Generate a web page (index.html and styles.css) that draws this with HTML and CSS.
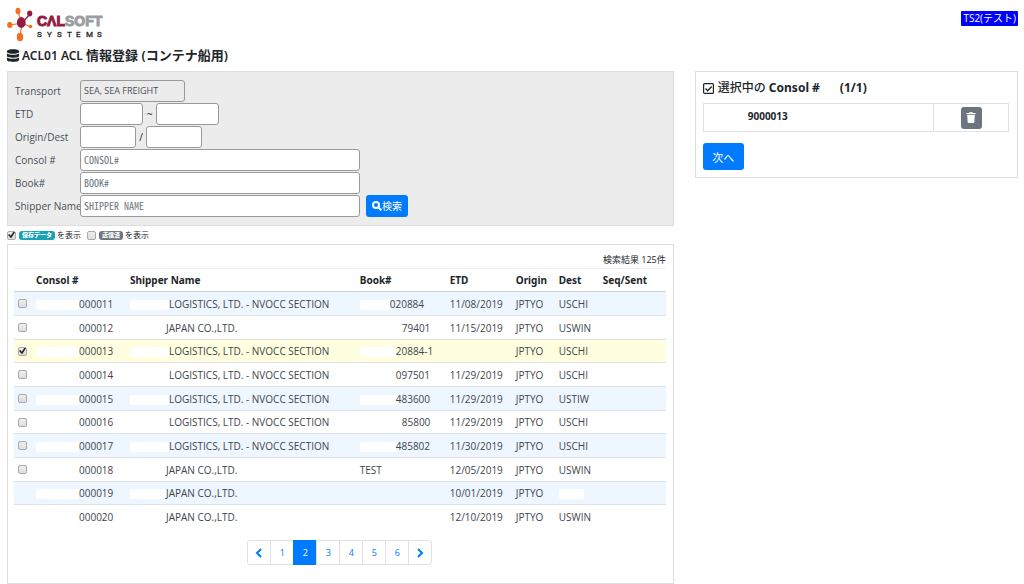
FILE: index.html
```html
<!DOCTYPE html>
<html lang="ja">
<head>
  <meta charset="UTF-8">
  <meta name="viewport" content="width=device-width, initial-scale=1.0">
  <title>ACL01 ACL 情報登録</title>
  <link rel="stylesheet" href="styles.css">
</head>
<body>
  <header class="topbar">
    <a href="#" class="logo" aria-label="Calsoft Systems">
      <svg width="98" height="36" viewBox="0 0 98 36">
        <g stroke="#e8752b" stroke-width="1.2">
          <path d="M15 16L11 5M15 16L3 18M15 17L13 29M15 16l9 4"/>
          <path d="M15 16l8-9" stroke="#8f1a3d"/>
        </g>
        <g fill="#f26f21">
          <ellipse cx="11" cy="4" rx="2.5" ry="3.2"/>
          <ellipse cx="2.8" cy="18" rx="2.7" ry="3"/>
          <ellipse cx="13" cy="30" rx="3.2" ry="4.3"/>
          <circle cx="23.5" cy="19.5" r="1.8"/>
        </g>
        <g fill="#951b40">
          <ellipse cx="14.3" cy="15.5" rx="4.4" ry="5.4"/>
          <ellipse cx="22.7" cy="6.5" rx="2.6" ry="3"/>
        </g>
        <text class="logo-name" x="30" y="19" fill="#951b40" stroke="#951b40">CΛL<tspan fill="#9b9d9f" stroke="#9b9d9f">SOFT</tspan></text>
        <text class="logo-sub" x="30 40 50 60 69 79 90" y="30">SYSTEMS</text>
      </svg>
    </a>
    <span class="env">TS2(テスト)</span>
  </header>

  <h1 class="page-title">
    <svg width="12" height="13" viewBox="0 0 12 13" fill="#212529">
      <path d="M0 2C0-.5 12-.5 12 2v1c0 2.400-12 2.400-12 0z"/>
      <path d="M0 4.500c2 1.800 10 1.800 12 0V7c0 2.300-12 2.300-12 0z"/>
      <path d="M0 8.500c2 1.800 10 1.800 12 0V11c0 2.500-12 2.500-12 0z"/>
    </svg>
    <span>ACL01 ACL <span class="title-ja">情報登録 (コンテナ船用)</span></span>
  </h1>

  <div class="columns">
    <main>
      <form class="search">
        <div class="field">
          <label for="transport">Transport</label>
          <input id="transport" class="w-transport" type="text" value="SEA, SEA FREIGHT" disabled>
        </div>
        <div class="field">
          <label for="etdFrom">ETD</label>
          <input id="etdFrom" class="w-date" type="text">
          <span class="sep">~</span>
          <input class="w-date" type="text" aria-label="ETD to">
        </div>
        <div class="field">
          <label for="origin">Origin/Dest</label>
          <input id="origin" class="w-port" type="text">
          <span class="sep sep-slash">/</span>
          <input class="w-port" type="text" aria-label="Dest">
        </div>
        <div class="field">
          <label for="consol">Consol #</label>
          <input id="consol" class="w-full" type="text" placeholder="CONSOL#">
        </div>
        <div class="field">
          <label for="book">Book#</label>
          <input id="book" class="w-full" type="text" placeholder="BOOK#">
        </div>
        <div class="field">
          <label for="shipper">Shipper Name</label>
          <input id="shipper" class="w-full" type="text" placeholder="SHIPPER NAME">
          <button type="button" class="btn btn-search">
            <svg width="10" height="10" viewBox="0 0 10 10" fill="none" stroke="#fff" stroke-width="2">
              <circle cx="4" cy="4" r="3"/><path d="M6.200 6.200L9.300 9.300"/>
            </svg>検索
          </button>
        </div>
      </form>

      <div class="filters">
        <label><input type="checkbox" checked><span class="badge badge-info">保存データ</span>を表示</label>
        <label><input type="checkbox"><span class="badge badge-sent">送信済</span>を表示</label>
      </div>

      <section class="results">
        <p class="count">検索結果 125件</p>
        <table class="list">
          <colgroup>
            <col class="c-check"><col class="c-consol"><col><col class="c-book">
            <col class="c-etd"><col class="c-origin"><col class="c-dest"><col class="c-seq">
          </colgroup>
          <thead>
            <tr><th></th><th>Consol #</th><th>Shipper Name</th><th>Book#</th><th>ETD</th><th>Origin</th><th>Dest</th><th>Seq/Sent</th></tr>
          </thead>
          <tbody>
            <tr>
              <td><input type="checkbox" aria-label="000011"></td>
              <td><i class="mask m-consol"></i>000011</td>
              <td><i class="mask m-logi"></i>LOGISTICS, LTD. - NVOCC SECTION</td>
              <td><i class="mask m-30"></i>020884</td>
              <td>11/08/2019</td><td>JPTYO</td><td>USCHI</td><td></td>
            </tr>
            <tr>
              <td><input type="checkbox" aria-label="000012"></td>
              <td><i class="mask m-consol"></i>000012</td>
              <td><i class="mask m-japan"></i>JAPAN CO.,LTD.</td>
              <td><i class="mask m-42"></i>79401</td>
              <td>11/15/2019</td><td>JPTYO</td><td>USWIN</td><td></td>
            </tr>
            <tr class="selected">
              <td><input type="checkbox" aria-label="000013" checked></td>
              <td><i class="mask m-consol"></i>000013</td>
              <td><i class="mask m-logi"></i>LOGISTICS, LTD. - NVOCC SECTION</td>
              <td><i class="mask m-36"></i>20884-1</td>
              <td></td><td>JPTYO</td><td>USCHI</td><td></td>
            </tr>
            <tr>
              <td><input type="checkbox" aria-label="000014"></td>
              <td><i class="mask m-consol"></i>000014</td>
              <td><i class="mask m-logi"></i>LOGISTICS, LTD. - NVOCC SECTION</td>
              <td><i class="mask m-36"></i>097501</td>
              <td>11/29/2019</td><td>JPTYO</td><td>USCHI</td><td></td>
            </tr>
            <tr>
              <td><input type="checkbox" aria-label="000015"></td>
              <td><i class="mask m-consol"></i>000015</td>
              <td><i class="mask m-logi"></i>LOGISTICS, LTD. - NVOCC SECTION</td>
              <td><i class="mask m-36"></i>483600</td>
              <td>11/29/2019</td><td>JPTYO</td><td>USTIW</td><td></td>
            </tr>
            <tr>
              <td><input type="checkbox" aria-label="000016"></td>
              <td><i class="mask m-consol"></i>000016</td>
              <td><i class="mask m-logi"></i>LOGISTICS, LTD. - NVOCC SECTION</td>
              <td><i class="mask m-42"></i>85800</td>
              <td>11/29/2019</td><td>JPTYO</td><td>USCHI</td><td></td>
            </tr>
            <tr>
              <td><input type="checkbox" aria-label="000017"></td>
              <td><i class="mask m-consol"></i>000017</td>
              <td><i class="mask m-logi"></i>LOGISTICS, LTD. - NVOCC SECTION</td>
              <td><i class="mask m-36"></i>485802</td>
              <td>11/30/2019</td><td>JPTYO</td><td>USCHI</td><td></td>
            </tr>
            <tr>
              <td><input type="checkbox" aria-label="000018"></td>
              <td><i class="mask m-consol"></i>000018</td>
              <td><i class="mask m-japan"></i>JAPAN CO.,LTD.</td>
              <td>TEST</td>
              <td>12/05/2019</td><td>JPTYO</td><td>USWIN</td><td></td>
            </tr>
            <tr>
              <td></td>
              <td><i class="mask m-consol"></i>000019</td>
              <td><i class="mask m-japan"></i>JAPAN CO.,LTD.</td>
              <td></td>
              <td>10/01/2019</td><td>JPTYO</td><td><i class="mask m-dest"></i></td><td></td>
            </tr>
            <tr>
              <td></td>
              <td><i class="mask m-consol"></i>000020</td>
              <td><i class="mask m-japan"></i>JAPAN CO.,LTD.</td>
              <td></td>
              <td>12/10/2019</td><td>JPTYO</td><td>USWIN</td><td></td>
            </tr>
          </tbody>
        </table>

        <nav class="pager" aria-label="Pages">
          <a href="#" aria-label="Previous"><svg width="8" height="10" viewBox="0 0 8 10"><path d="M6 1L2 5l4 4"/></svg></a>
          <a href="#">1</a>
          <a href="#" class="active">2</a>
          <a href="#">3</a>
          <a href="#">4</a>
          <a href="#">5</a>
          <a href="#">6</a>
          <a href="#" aria-label="Next"><svg width="8" height="10" viewBox="0 0 8 10"><path d="M2 1l4 4-4 4"/></svg></a>
        </nav>
      </section>
    </main>

    <aside class="picked">
      <h2>
        <svg width="11" height="11" viewBox="0 0 11 11" fill="none" stroke="#212529">
          <rect x=".6" y=".6" width="9.800" height="9.800" rx="1" stroke-width="1.200"/>
          <path d="M2.500 5.500l2.200 2.200 4-4.200" stroke-width="1.400"/>
        </svg>
        <span><span class="picked-ja">選択中の</span> Consol #</span>
        <span class="ratio">(1/1)</span>
      </h2>
      <table class="picked-list">
        <tr>
          <td>9000013</td>
          <td class="act">
            <button type="button" class="btn btn-trash" aria-label="削除">
              <svg width="10" height="11" viewBox="0 0 10 11" fill="#fff">
                <path d="M.5 1H3l.5-.8h3L7 1h2.500v1.300h-9zM1.200 3h7.600l-.5 7.200q0 .8-.8.8h-5q-.8 0-.8-.8z"/>
              </svg>
            </button>
          </td>
        </tr>
      </table>
      <button type="button" class="btn btn-next">次へ</button>
    </aside>
  </div>
</body>
</html>
```
FILE: styles.css
```css
* {
  box-sizing: border-box;
}
body {
  margin: 0;
  padding: 7px 6px 0 7px;
  background: #fff;
  color: #212529;
  font-family: "Open Sans", "Noto Sans CJK JP", sans-serif;
  font-size: 10px;
  line-height: 16px;
}
svg {
  display: block;
  flex: none;
}
input, button {
  font-family: inherit;
  margin: 0;
}

/* header */
.topbar {
  display: flex;
  justify-content: space-between;
  align-items: flex-start;
}
.logo-name {
  font: bold 14px "Liberation Sans", sans-serif;
  stroke-width: 1px;
}
.logo-sub {
  font: 8px Roboto, sans-serif;
  fill: #222;
  stroke: #222;
  stroke-width: 0.3px;
}
.env {
  margin-top: 4px;
  padding: 0 2px;
  background: #00f;
  color: #fff;
  line-height: 15px;
  border-radius: 1px;
}
.page-title {
  display: flex;
  align-items: center;
  gap: 3px;
  margin: 3px 0 6px;
  font-family: "Noto Sans", "Noto Sans CJK JP", sans-serif;
  font-size: 12px;
  font-weight: 600;
  line-height: 18px;
}
.title-ja {
  font-size: 13px;
}

/* layout */
.columns {
  display: grid;
  grid-template-columns: 33fr 16fr;
  gap: 21px;
  align-items: start;
}

/* search form */
.search {
  padding: 7px 8px 8px 7px;
  background: #ececec;
  border: 1px solid #ddd;
}
.field {
  display: flex;
  align-items: center;
  height: 23px;
}
.field label {
  width: 65px;
  white-space: nowrap;
  color: #495057;
}
.field input {
  height: 22px;
  padding: 0 3px;
  border: 1px solid #999;
  border-radius: 3px;
  background: #fff;
  color: #495057;
  font-size: 10px;
}
.field input:disabled {
  background: #ebebeb;
  font-size: 9px;
  font-family: "Open Sans", sans-serif;
}
.field input::placeholder {
  color: #6c757d;
  font-family: "Noto Sans CJK JP", sans-serif;
  font-feature-settings: "hwid";
}
.field .w-transport { width: 105px; }
.field .w-date { width: 63px; }
.field .w-port { width: 56px; }
.field .w-full { width: 280px; }
.sep {
  width: 13px;
  text-align: center;
}
.sep-slash {
  width: 10px;
}
.btn {
  display: flex;
  align-items: center;
  justify-content: center;
  padding: 0;
  border: none;
  border-radius: 3px;
  background: #007bff;
  color: #fff;
  font-size: 10px;
  cursor: pointer;
}
.btn-search {
  width: 42px;
  height: 22px;
  margin-left: 6px;
}

/* check boxes */
input[type="checkbox"] {
  appearance: none;
  display: block;
  width: 9px;
  height: 9px;
  border: 1px solid #aaa;
  border-radius: 2px;
  background: linear-gradient(#eee, #ddd);
}
input[type="checkbox"]:checked::before {
  content: "";
  display: block;
  width: 7px;
  height: 7px;
  background: #222;
  clip-path: polygon(0 50%, 20% 35%, 40% 60%, 80% 0, 100% 12%, 45% 95%);
}
.filters {
  display: flex;
  gap: 6px;
  height: 18px;
  font-size: 8px;
}
.filters label {
  display: flex;
  align-items: center;
}
.badge {
  margin: 0 2px 0 3px;
  padding: 0 3px;
  border-radius: 3px;
  color: #fff;
  font-size: 6px;
  font-weight: 900;
  line-height: 9px;
}
.badge-info { background: #17a2b8; }
.badge-sent { background: #6c757d; }

/* results */
.results {
  padding: 7px 7px 18px 6px;
  border: 1px solid #ddd;
}
.count {
  margin: 0;
  text-align: right;
  font-size: 9px;
}
.list {
  width: 100%;
  table-layout: fixed;
  border-collapse: separate;
  border-spacing: 0;
}
.c-check { width: 18px; }
.c-consol { width: 94px; }
.c-book { width: 90px; }
.c-etd { width: 66px; }
.c-origin { width: 43px; }
.c-dest { width: 44px; }
.c-seq { width: 67px; }
.list th, .list td {
  height: 24px;
  padding: 0 0 0 4px;
  border-bottom: 1px solid #dee2e6;
  text-align: left;
  white-space: nowrap;
}
.list th {
  border-top: 1px solid #eee;
  border-bottom-color: #ccd2d8;
  font-family: "Noto Sans", sans-serif;
  font-weight: 700;
}
.list td {
  color: #40464c;
}
.list tbody tr:nth-child(3n) td {
  height: 23px;
}
.list tbody tr:nth-child(odd) {
  background: #eef6ff;
}
.list tbody tr.selected {
  background: #ffffdf;
}
.list tr:last-child td {
  border-bottom: none;
}
.mask {
  display: inline-block;
  height: 10px;
  background: #fff;
  border-radius: 2px;
  vertical-align: middle;
}
.m-consol { width: 43px; }
.m-logi { width: 39px; }
.m-japan { width: 36px; }
.m-30 { width: 30px; }
.m-36 { width: 36px; }
.m-42 { width: 42px; }
.m-dest { width: 25px; }

/* pager */
.pager {
  display: flex;
  justify-content: center;
  margin: 11px 0 0;
}
.pager a {
  display: flex;
  align-items: center;
  justify-content: center;
  width: 24px;
  height: 25px;
  margin-left: -1px;
  border: 1px solid #dee2e6;
  color: #007bff;
  font-size: 9px;
  text-decoration: none;
}
.pager a:first-child {
  margin-left: 0;
  border-radius: 3px 0 0 3px;
}
.pager a:last-child { border-radius: 0 3px 3px 0; }
.pager a.active {
  background: #007bff;
  border-color: #007bff;
  color: #fff;
}
.pager svg {
  fill: none;
  stroke: #007bff;
  stroke-width: 2;
}

/* picked consol */
.picked {
  padding: 7px 8px 7px 7px;
  border: 1px solid #ddd;
}
.picked h2 {
  display: flex;
  align-items: center;
  gap: 4px;
  margin: 0 0 6px;
  font-family: "Noto Sans", "Noto Sans CJK JP", sans-serif;
  font-size: 12px;
  font-weight: 700;
  line-height: 18px;
}
.picked-ja {
  font-weight: 500;
}
.ratio {
  margin-left: 16px;
}
.picked-list {
  width: 100%;
  margin-bottom: 11px;
  border-collapse: collapse;
}
.picked-list td {
  height: 28px;
  padding: 0 0 3px 44px;
  border: 1px solid #dee2e6;
  font-weight: 700;
}
.picked-list .act {
  width: 75px;
  padding: 0;
}
.btn-trash {
  width: 21px;
  height: 22px;
  margin: 0 auto;
  background: #6c757d;
}
.btn-next {
  width: 41px;
  height: 27px;
  font-size: 11px;
}
```
